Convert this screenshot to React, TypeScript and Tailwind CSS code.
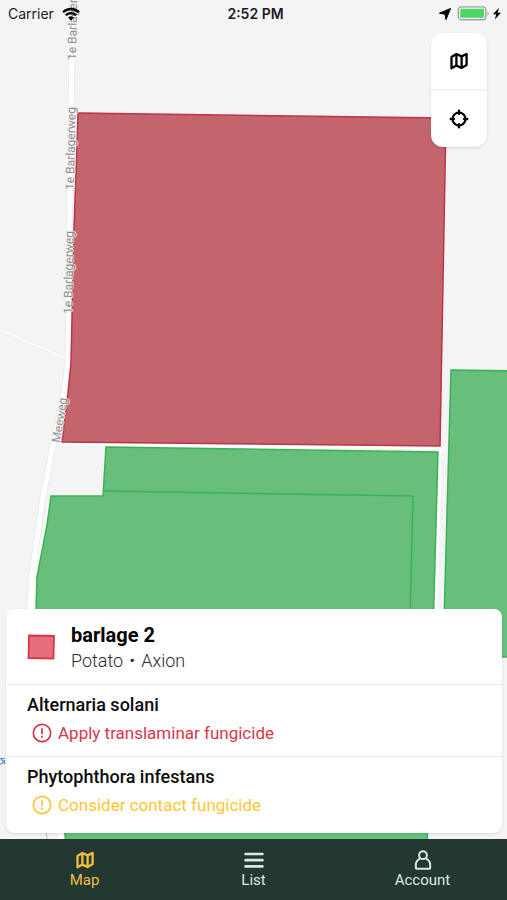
import React, { useState } from "react";

type IconProps = { className?: string };

const MapIcon = ({ className }: IconProps) => (
  <svg viewBox="0 0 18 18" className={className} fill="none" stroke="currentColor" strokeWidth="2.3" strokeLinejoin="round" aria-hidden="true">
    <path d="M1.5 5 6.400 2 11.600 4.400 16.600 2V13L11.600 16 6.400 13.600 1.500 16.200Z" />
    <path d="M6.400 2v11.600M11.600 4.400V16" />
  </svg>
);

const TargetIcon = ({ className }: IconProps) => (
  <svg viewBox="0 0 20 20" className={className} fill="none" stroke="currentColor" strokeWidth="2.2" strokeLinecap="round" aria-hidden="true">
    <circle cx="10" cy="10" r="6.500" />
    <path d="M10 1.800v3M10 15.200v3M1.800 10h3M15.200 10h3" strokeWidth="2.400" />
  </svg>
);

const ListIcon = ({ className }: IconProps) => (
  <svg viewBox="0 0 20 18" className={className} fill="none" stroke="currentColor" strokeWidth="2.7" strokeLinecap="round" aria-hidden="true">
    <path d="M1.600 3h16.800M1.600 9.200h16.800M1.600 15.400h16.800" />
  </svg>
);

const AccountIcon = ({ className }: IconProps) => (
  <svg viewBox="0 0 18 20" className={className} fill="none" stroke="currentColor" strokeWidth="2" strokeLinejoin="round" aria-hidden="true">
    <circle cx="9" cy="5.200" r="3.900" />
    <path d="M6 8.600C3.400 9.800 1.800 12.400 1.800 15.200v2c0 1 .6 1.600 1.600 1.600h11.200c1 0 1.600-.6 1.600-1.600v-2c0-2.800-1.600-5.400-4.200-6.600" />
  </svg>
);

const AlertIcon = ({ className }: IconProps) => (
  <svg viewBox="0 0 20 20" className={className} fill="none" stroke="currentColor" strokeWidth="1.700" aria-hidden="true">
    <circle cx="10" cy="10" r="8.700" />
    <path d="M10 5.200v6M10 12.800v2" />
  </svg>
);

const tabs = [
  { title: "Map", Icon: MapIcon, size: "w-[18px] h-[18px]" },
  { title: "List", Icon: ListIcon, size: "w-5 h-[18px]" },
  { title: "Account", Icon: AccountIcon, size: "w-[18px] h-5" },
];

const diseases = [
  { name: "Alternaria solani", advice: "Apply translaminar fungicide", color: "text-[#d7374b]" },
  { name: "Phytophthora infestans", advice: "Consider contact fungicide", color: "text-[#fcc633]" },
];

const FieldMap = () => (
  <svg
    viewBox="0 0 507 900"
    preserveAspectRatio="xMidYMin slice"
    className="absolute inset-0 w-full h-full"
    role="img"
    aria-label="Field map"
  >
    <rect width="507" height="900" fill="#f4f4f4" />
    {/* roads */}
    <g fill="none" strokeLinejoin="round">
      <path d="M0 330 68 359" stroke="#e9e9e9" strokeWidth="3" />
      <path d="M0 330 68 359" stroke="#fff" strokeWidth="2" />
      <path d="M73 0 71 110 68 362 63 400 52 450 43 497 32 575 29 620" stroke="#ebebeb" strokeWidth="7" />
      <path d="M73 0 71 110 68 362 63 400 52 450 43 497 32 575 29 620" stroke="#fff" strokeWidth="5" />
      <path d="M49 500 43 535 34 577 33 620" stroke="#fff" strokeWidth="2" />
      <path d="M61 444 446 448" stroke="#fff" strokeWidth="3" />
      <path d="M440 448 436 620" stroke="#fff" strokeWidth="3" />
      <path d="M45 830 49 845" stroke="#a9cdf0" strokeWidth="1.200" />
      <path d="M60 828 62 845" stroke="#fff" strokeWidth="5" />
    </g>
    {/* fields */}
    <g fill="#67bf7b" stroke="#3cb257" strokeWidth="1.500">
      <path d="M106 447 438 452 427 850H67L36 612 37 577 47 525 51 496H103Z" />
      <path d="M104 491 413 496 410 620" fill="none" />
      <path d="M451 370 515 371V657H443Z" />
    </g>
    <path d="M78 113 446 118 440 446 62 442 68 393 71 363 74 230Z" fill="#c4646d" stroke="#bf3349" strokeWidth="1.500" />
    {/* labels */}
    <g
      fontFamily="Roboto, sans-serif"
      fontSize="12"
      fill="#8f8f8f"
      stroke="#f4f4f4"
      strokeWidth="2"
      strokeOpacity="0.7"
      paintOrder="stroke"
    >
      <text transform="translate(76 60) rotate(-89)">1e Barlagerweg</text>
      <text transform="translate(74 190) rotate(-89)">1e Barlagerweg</text>
      <text transform="translate(72 314) rotate(-89)">1e Barlagerweg</text>
      <text transform="translate(60 443) rotate(-81)">Meeweg</text>
    </g>
    <path d="M0 758.500h5M0 764c2 0 4-1 5-4M1 759c2 2 3 3 4 5" fill="none" stroke="#5b8ed8" strokeWidth="1.200" />
  </svg>
);

const StatusBar = () => (
  <header className="relative grid grid-cols-3 items-center h-7 pl-2 pr-1 font-['Inter',sans-serif] text-sm text-[#1b1b1b]">
    <div className="flex items-center gap-2">
      <span>Carrier</span>
      <svg viewBox="0 0 18 14" className="w-[18px] h-[14px]" fill="none" stroke="#000" strokeWidth="2.300" aria-hidden="true">
        <path d="M1 5.300a11.400 11.400 0 0 1 16 0M3.800 8.300a7.400 7.400 0 0 1 10.400 0" />
        <path d="M9 13.600 6.100 10.600a4.200 4.200 0 0 1 5.800 0Z" fill="#000" stroke="none" />
      </svg>
    </div>
    <span className="text-center font-semibold">2:52 PM</span>
    <div className="flex items-center justify-end">
      <svg viewBox="0 0 12 12" className="w-3 h-3 mr-[6px]" aria-hidden="true">
        <path d="M11.500.5 7 11.600 6 6.200.4 5.200Z" fill="#000" stroke="#000" strokeWidth="1" strokeLinejoin="round" />
      </svg>
      <svg viewBox="0 0 46 16" className="w-[46px] h-4" aria-hidden="true">
        <rect x="1.300" y=".9" width="27.600" height="12.800" rx="3.200" fill="#f4f4f4" stroke="#a2a2a2" strokeWidth="1.400" />
        <rect x="3.200" y="2.800" width="23.800" height="9" rx="1.200" fill="#4bd763" />
        <path d="M30.500 5.500v4c1.500-.5 1.500-3.500 0-4Z" fill="#a2a2a2" />
        <path d="M42 1.800 36 8.200h3.200L37.800 13.600 44 6.800h-3.300Z" fill="#000" />
      </svg>
    </div>
  </header>
);

const FieldCard = () => (
  <section className="relative mt-auto ml-[6px] mr-[5px] mb-[6px] bg-white rounded-lg shadow-sm">
    <div className="flex items-center h-[75px] pl-[21px] gap-4">
      <svg viewBox="0 0 28 26" className="w-7 h-[26px]" aria-hidden="true">
        <path d="M2 1.500 27 2 26.500 24.500 1.500 24Z" fill="#e5707c" stroke="#d5384b" strokeWidth="1.800" />
      </svg>
      <div className="flex flex-col">
        <h1 className="text-[20px] leading-7 font-bold text-black">barlage 2</h1>
        <p className="text-[18px] leading-6 font-light text-[#2b2b2b]">Potato・Axion</p>
      </div>
    </div>
    {diseases.map(({ name, advice, color }) => (
      <div key={name} className="h-[72px] last:h-[77px] pt-2 pl-[21px] border-t border-[#ececec]">
        <h2 className="text-[18px] leading-6 font-medium text-[#0c0c0c]">{name}</h2>
        <p className={`flex items-center gap-[6px] pl-[5px] mt-1 text-[17px] leading-6 ${color}`}>
          <AlertIcon className="w-5 h-5" />
          {advice}
        </p>
      </div>
    ))}
  </section>
);

const App = () => {
  const [activeTab, setActiveTab] = useState("Map");

  return (
    <div className="flex flex-col min-h-screen bg-[#f4f4f4] font-['Roboto','Noto_Sans_CJK_JP',sans-serif]">
      <main className="relative flex flex-col grow overflow-hidden">
        <div className="absolute inset-x-0 top-0 h-screen">
          <FieldMap />
        </div>
        <StatusBar />
        <div className="relative self-end flex flex-col w-14 mt-[5px] mr-5 bg-white rounded-xl shadow-sm">
          <button type="button" aria-label="Map layers" className="flex items-center justify-center h-14">
            <MapIcon className="w-[18px] h-[18px]" />
          </button>
          <button type="button" aria-label="My location" className="flex items-center justify-center h-[58px] border-t-2 border-[#f2f2f2]">
            <TargetIcon className="w-5 h-5" />
          </button>
        </div>
        <FieldCard />
      </main>
      <nav className="grid grid-cols-3 h-[61px] bg-[#223830]">
        {tabs.map(({ title, Icon, size }) => (
          <button
            key={title}
            type="button"
            onClick={() => setActiveTab(title)}
            className={`flex flex-col items-center pt-[11px] text-[15px] leading-5 ${
              activeTab === title ? "text-[#f5bd41]" : "text-[#dfe8e3]"
            }`}
          >
            <span className="flex items-center h-5">
              <Icon className={size} />
            </span>
            {title}
          </button>
        ))}
      </nav>
    </div>
  );
};

export default App;
